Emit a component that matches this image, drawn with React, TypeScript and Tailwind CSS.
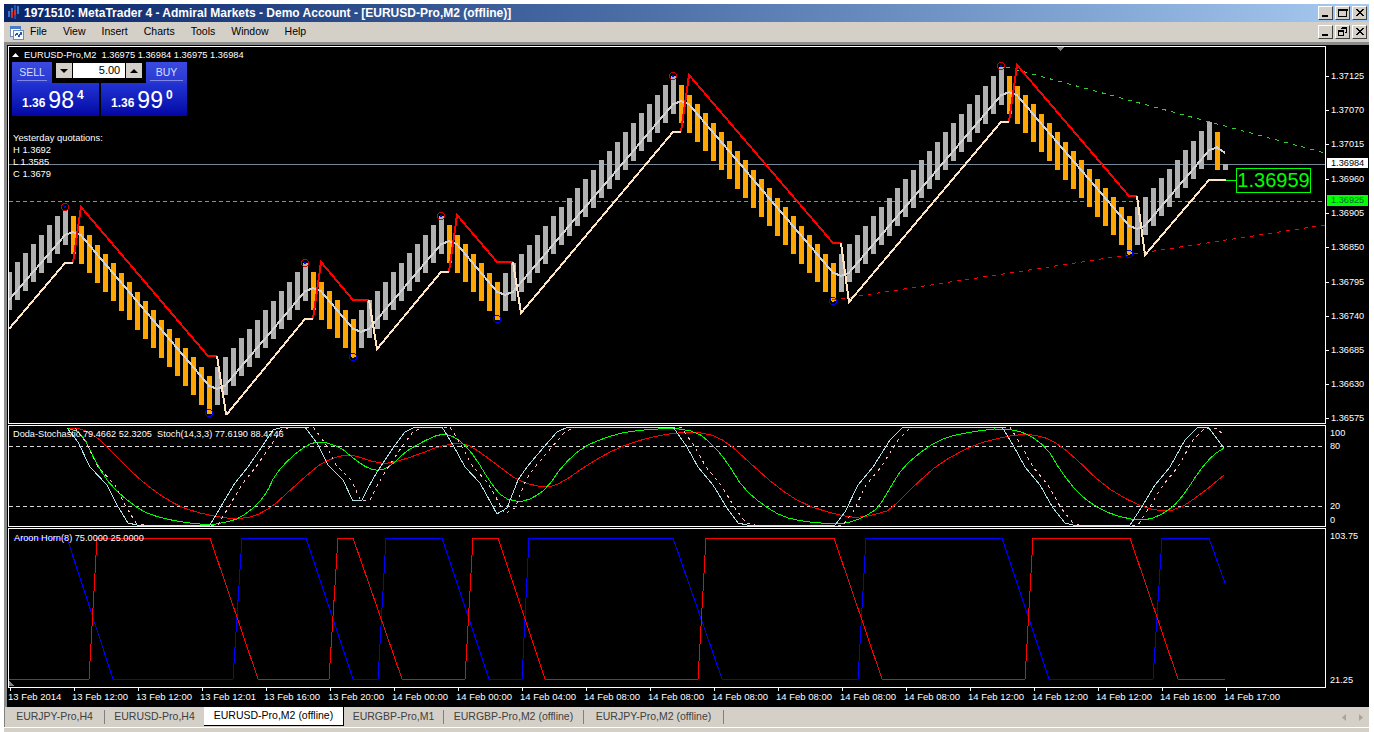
type Pt = [number, number];

const pts = (p: Pt[]) => p.map(([x, y]) => `${x},${y}`).join(' ');

// one corner-cutting pass, the slow stochastic lines are smooth in the terminal
function smooth(p: Pt[]): Pt[] {
  const out: Pt[] = [p[0]];
  for (let i = 0; i < p.length - 1; i++) {
    const [x0, y0] = p[i];
    const [x1, y1] = p[i + 1];
    out.push([x0 * 0.75 + x1 * 0.25, y0 * 0.75 + y1 * 0.25]);
    out.push([x0 * 0.25 + x1 * 0.75, y0 * 0.25 + y1 * 0.75]);
  }
  out.push(p[p.length - 1]);
  return out;
}

// renko bars: k is the bar slot (x = 8k + 1), value is the top of the bar
const pivots: Pt[] = [
  [-1, 290], [8, 207], [26, 376], [38, 263], [44, 319], [55, 216],
  [62, 282], [84, 76], [104, 263], [125, 67], [141, 216], [151, 122],
];

interface Bar {
  k: number;
  top: number;
  h: number;
  down: boolean;
}

function makeBars(): Bar[] {
  const out: Bar[] = [];
  for (let s = 0; s < pivots.length - 1; s++) {
    const [k0, y0] = pivots[s];
    const [k1, y1] = pivots[s + 1];
    for (let k = s === 0 ? k0 : k0 + 1; k <= k1; k++) {
      out.push({ k, top: Math.round(y0 + ((y1 - y0) * (k - k0)) / (k1 - k0)), h: 38, down: y1 > y0 });
    }
  }
  out.push({ k: 152, top: 132, h: 38, down: true });
  out.push({ k: 153, top: 164, h: 6, down: false });
  return out;
}

const bars = makeBars();
const mids = bars.map((b) => b.top + b.h / 2);
const maLine: Pt[] = bars.slice(2).map((b, i) => [8 * b.k + 1, (mids[i] + mids[i + 1] + mids[i + 2]) / 3]);

const redBands: Pt[][] = [
  [[73, 263], [81, 207], [208, 356], [217, 356]],
  [[313, 319], [321, 262], [353, 300], [369, 300]],
  [[449, 272], [457, 215], [497, 262], [513, 262]],
  [[681, 132], [689, 75], [833, 243], [841, 243]],
  [[1009, 122], [1017, 65], [1129, 196], [1137, 196]],
];

const creamBands: Pt[][] = [
  [[9, 329], [65, 263], [73, 263]],
  [[217, 356], [226, 414], [227, 414], [305, 319], [313, 319]],
  [[369, 300], [377, 349], [441, 272], [449, 272]],
  [[513, 262], [521, 313], [673, 132], [681, 132]],
  [[841, 243], [849, 302], [1001, 122], [1009, 122]],
  [[1137, 196], [1145, 255], [1209, 180], [1226, 180]],
];

const highs: Pt[] = [[65, 207], [305, 263], [441, 216], [673, 76], [1001, 66]];
const lows: Pt[] = [[209, 413], [353, 357], [497, 319], [833, 301], [1129, 254]];

const fast: Pt[] = [
  [67, 428], [78, 442], [90, 467], [107, 485], [117, 505], [128, 523], [137, 525], [210, 525], [220, 508],
  [235, 483], [248, 467], [263, 445], [273, 430], [283, 427], [305, 427], [317, 443], [328, 465], [343, 480],
  [353, 501], [362, 500], [368, 488], [377, 472], [393, 448], [405, 432], [415, 427], [442, 427], [453, 445],
  [465, 467], [480, 483], [497, 514], [507, 508], [518, 480], [527, 467], [543, 448], [557, 432], [568, 427],
  [673, 427], [687, 447], [698, 467], [713, 485], [727, 508], [738, 523], [747, 525], [835, 525], [845, 512],
  [858, 485], [873, 467], [890, 440], [903, 427], [1002, 427], [1013, 445], [1025, 467], [1040, 485], [1053, 508],
  [1065, 523], [1073, 525], [1130, 525], [1143, 505], [1155, 485], [1170, 467], [1185, 440], [1197, 428],
  [1208, 427], [1224, 448],
];

const signal: Pt[] = [
  ...fast.slice(0, -2).map(([x, y]): Pt => [x + 8, y]),
  [1216, 428], [1224, 435],
];

const green: Pt[] = [
  [67, 428], [82, 433], [97, 465], [112, 487], [133, 505], [150, 515], [180, 522], [210, 525], [227, 522],
  [240, 518], [257, 505], [267, 492], [275, 475], [290, 458], [307, 445], [320, 441], [340, 447], [353, 458],
  [367, 468], [380, 471], [392, 465], [405, 452], [422, 442], [440, 434], [450, 435], [462, 442], [475, 457],
  [490, 482], [503, 498], [520, 502], [533, 498], [547, 488], [563, 465], [583, 447], [607, 437], [630, 431],
  [673, 428], [697, 432], [713, 445], [727, 462], [743, 488], [763, 505], [783, 517], [807, 522], [835, 524],
  [853, 522], [873, 512], [880, 505], [890, 488], [903, 467], [927, 447], [947, 437], [970, 432], [1002, 428],
  [1027, 433], [1047, 448], [1060, 470], [1077, 492], [1093, 505], [1113, 515], [1140, 521], [1157, 517],
  [1173, 507], [1185, 493], [1200, 470], [1213, 455], [1224, 448],
];

const red: Pt[] = [
  [67, 428], [80, 428], [97, 437], [113, 453], [137, 477], [157, 493], [180, 507], [207, 515], [233, 519],
  [253, 517], [272, 507], [287, 493], [307, 475], [323, 462], [343, 455], [353, 455], [377, 463], [392, 463],
  [417, 455], [440, 446], [460, 443], [473, 447], [497, 465], [520, 482], [547, 488], [563, 482], [587, 465],
  [617, 448], [647, 438], [680, 432], [707, 433], [727, 442], [750, 463], [777, 487], [803, 504], [837, 515],
  [860, 518], [880, 513], [890, 510], [917, 483], [940, 463], [973, 445], [1007, 436], [1030, 434], [1050, 439],
  [1070, 453], [1103, 485], [1133, 503], [1157, 511], [1177, 510], [1200, 495], [1224, 475],
];

const T = 538;
const B = 679;
const aroonBlue: Pt[] = [
  [13, T], [67, T], [113, B], [233, B], [242, T], [306, T], [353, B], [378, B], [386, T], [442, T], [489, B],
  [522, B], [529, T], [673, T], [722, B], [858, B], [866, T], [1002, T], [1049, B], [1153, B], [1162, T],
  [1209, T], [1225, 583],
];
const aroonRed: Pt[] = [
  [9, B], [89, B], [97, T], [210, T], [258, B], [329, B], [338, T], [353, T], [402, B], [465, B], [473, T],
  [498, T], [545, B], [698, B], [706, T], [834, T], [882, B], [1025, B], [1033, T], [1130, T], [1178, B], [1225, B],
];

const times = [
  '13 Feb 2014', '13 Feb 12:00', '13 Feb 12:00', '13 Feb 12:01', '13 Feb 16:00', '13 Feb 20:00', '14 Feb 00:00',
  '14 Feb 00:00', '14 Feb 04:00', '14 Feb 08:00', '14 Feb 08:00', '14 Feb 08:00', '14 Feb 08:00', '14 Feb 08:00',
  '14 Feb 08:00', '14 Feb 12:00', '14 Feb 12:00', '14 Feb 12:00', '14 Feb 16:00', '14 Feb 17:00',
];

const mainScale: [string, number][] = [
  ['1.37125', 76], ['1.37070', 110], ['1.37015', 144], ['1.36960', 179], ['1.36905', 213],
  ['1.36850', 247], ['1.36795', 282], ['1.36740', 316], ['1.36685', 350], ['1.36630', 384], ['1.36575', 418],
];

const tabs = [
  { name: 'EURJPY-Pro,H4', w: 'w-[100px]', sep: true },
  { name: 'EURUSD-Pro,H4', w: 'w-[99px]' },
  { name: 'EURUSD-Pro,M2 (offline)', w: 'w-[140px]', active: true },
  { name: 'EURGBP-Pro,M1', w: 'w-[100px]', sep: true },
  { name: 'EURGBP-Pro,M2 (offline)', w: 'w-[140px]', sep: true },
  { name: 'EURJPY-Pro,M2 (offline)', w: 'w-[140px]', sep: true },
];

function WinButton({ kind }: { kind: 'min' | 'max' | 'close' | 'restore' }) {
  return (
    <div className="w-[15px] h-[14px] bg-[#d4d0c8] border-t border-l border-t-white border-l-white border-r border-b border-r-[#404040] border-b-[#404040]">
      <svg width="13" height="12" viewBox="0 0 13 12" shapeRendering="crispEdges">
        {kind === 'min' && <rect x="3" y="8" width="6" height="2" fill="#000" />}
        {kind === 'max' && <path d="M2.5 2.5h8v7h-8z M2 2h9v1H2z" fill="none" stroke="#000" />}
        {kind === 'close' && <path d="M3 2l7 7M4 2l7 7M10 2l-7 7M11 2l-7 7" stroke="#000" fill="none" />}
        {kind === 'restore' && <path d="M5.5 1.5h5v5h-2M5 2h6M2.5 4.5h5v5h-5zM2 5h6" stroke="#000" fill="none" />}
      </svg>
    </div>
  );
}

function PriceBlock({ big, pip, w }: { big: string; pip: string; w: string }) {
  return (
    <div className={`${w} h-[33px] flex items-start pl-[10px] bg-linear-to-b from-[#2232d4] to-[#0404a4] text-white`}>
      <span className="mt-[13px] text-[12px] leading-[14px] font-bold">1.36</span>
      <span className="mt-[4px] ml-[3px] text-[23px] leading-[27px]">{big}</span>
      <span className="mt-[5px] ml-[3px] text-[12px] leading-[14px] font-bold">{pip}</span>
    </div>
  );
}

function TradePanel() {
  return (
    <div className="absolute left-[3px] top-[15px] w-[175px]">
      <div className="flex items-start">
        <div className="w-[40px] h-[21px] bg-linear-to-b from-[#3a4ae0] to-[#2a38d0] text-[#d8deff] text-[10.5px] flex flex-col items-center pt-[3px]">
          <span className="leading-[14px]">SELL</span>
          <span className="w-[30px] h-px bg-[#7f88e8] mt-px" />
        </div>
        <div className="ml-[3px] w-[88px] h-[17px] bg-black flex items-center gap-px px-px">
          <div className="w-4 h-[15px] bg-[#d4d0c8] flex items-center justify-center">
            <svg width="8" height="4" viewBox="0 0 8 4"><path d="M0 0h8L4 4z" fill="#000" /></svg>
          </div>
          <div className="w-[53px] h-[15px] bg-white text-black text-[11px] leading-[15px] text-right pr-[5px]">5.00</div>
          <div className="w-4 h-[15px] bg-[#d4d0c8] flex items-center justify-center">
            <svg width="8" height="4" viewBox="0 0 8 4"><path d="M0 4h8L4 0z" fill="#000" /></svg>
          </div>
        </div>
        <div className="ml-[3px] w-[41px] h-[21px] bg-linear-to-b from-[#3a4ae0] to-[#2a38d0] text-[#d8deff] text-[10.5px] flex flex-col items-center pt-[3px]">
          <span className="leading-[14px]">BUY</span>
          <span className="w-[33px] h-px bg-[#7f88e8] mt-px" />
        </div>
      </div>
      <div className="flex gap-[2px]">
        <PriceBlock big="98" pip="4" w="w-[87px]" />
        <PriceBlock big="99" pip="0" w="w-[86px]" />
      </div>
    </div>
  );
}

function MainChart() {
  return (
    <svg width="1316" height="376" viewBox="9 47 1316 376" shapeRendering="crispEdges" className="block">
      <line x1="9" x2="1325" y1="164.5" y2="164.5" stroke="#778899" />
      <line x1="9" x2="1325" y1="201.5" y2="201.5" stroke="#32cd32" strokeDasharray="4 3" />
      <polygon points="1056,47 1065,47 1060.5,51" fill="#808080" />
      {bars.filter((b) => b.k >= 1).map((b) => (
        <rect
          key={b.k}
          x={8 * b.k - 1}
          y={b.k === 8 ? 210 : b.top}
          width="5"
          height={b.k === 8 ? 35 : b.h}
          fill={b.down ? '#ffa500' : '#b0b0b0'}
        />
      ))}
      <line x1="1006" y1="67" x2="1325" y2="153" stroke="#32cd32" strokeDasharray="4 5" />
      <line x1="832" y1="300" x2="1325" y2="225" stroke="#ff0000" strokeDasharray="4 5" />
      <polyline points={pts(maLine)} fill="none" stroke="#d3d3d3" strokeWidth="2" strokeLinejoin="round" />
      {redBands.map((p, i) => (
        <polyline key={i} points={pts(p)} fill="none" stroke="#ff0000" strokeWidth="2" />
      ))}
      {creamBands.map((p, i) => (
        <polyline key={i} points={pts(p)} fill="none" stroke="#ffe4c4" strokeWidth="2" />
      ))}
      <line x1="1226" x2="1236" y1="180" y2="180" stroke="#00ff00" />
      {highs.map(([x, y]) => (
        <g key={x}>
          <circle cx={x} cy={y} r="3.5" fill="none" stroke="#d00000" />
          <rect x={x - 1} y={y - 1} width="2" height="2" fill="#0000ff" />
        </g>
      ))}
      {lows.map(([x, y]) => (
        <g key={x}>
          <circle cx={x} cy={y} r="3.5" fill="none" stroke="#0000ff" />
          <rect x={x - 1} y={y - 1} width="2" height="2" fill="#ffa500" />
        </g>
      ))}
    </svg>
  );
}

function StochChart() {
  return (
    <svg width="1316" height="100" viewBox="9 426 1316 100" shapeRendering="crispEdges" className="block">
      <line x1="9" x2="1325" y1="446.5" y2="446.5" stroke="#d8d8d8" strokeDasharray="4 3" />
      <line x1="9" x2="1325" y1="506.5" y2="506.5" stroke="#d8d8d8" strokeDasharray="4 3" />
      <polyline points={pts(smooth(red))} fill="none" stroke="#ff0000" />
      <polyline points={pts(smooth(green))} fill="none" stroke="#00ff00" />
      <polyline points={pts(signal)} fill="none" stroke="#ffc0cb" strokeDasharray="3 4" />
      <polyline points={pts(fast)} fill="none" stroke="#b0e0e6" />
    </svg>
  );
}

function AroonChart() {
  return (
    <svg width="1316" height="158" viewBox="9 529 1316 158" shapeRendering="crispEdges" className="block">
      <polyline points={pts(aroonBlue)} fill="none" stroke="#0000ff" />
      <polyline points={pts(aroonRed)} fill="none" stroke="#ff0000" />
      <polygon points="9,681 14,686 9,686" fill="#808080" />
    </svg>
  );
}

function ScaleLabel({ y, children, tick = false }: { y: number; children: string; tick?: boolean }) {
  return (
    <div className="absolute left-0 flex items-center h-[12px]" style={{ top: y - 6 }}>
      <span className={tick ? 'w-[3px] h-px bg-white mr-[2px]' : 'w-[4px]'} />
      <span className="text-[9.2px] leading-[12px] text-white">{children}</span>
    </div>
  );
}

export default function App() {
  return (
    <div className="w-[1374px] h-[732px] bg-white overflow-hidden pt-1 pl-1 font-['Liberation_Sans',sans-serif]">
      <div className="w-[1365px] h-[728px] flex flex-col bg-[#d4d0c8]">
        {/* title bar */}
        <div className="h-[18px] flex items-center bg-linear-to-r from-[#0a246a] to-[#a6caf0] pl-1 pr-[2px]">
          <svg width="12" height="16" viewBox="0 0 12 16" shapeRendering="crispEdges">
            <path d="M0 6h2v6H0z M3 3h2v9H3z M9 1h2v8H9z" fill="#3a78c8" />
            <path d="M6 0h2v14H6z" fill="#2050a8" />
            <path d="M3 7h2v6H3z M6 5h2v5H6z" fill="#d03028" />
          </svg>
          <span className="ml-1 text-white font-bold text-[12px] whitespace-nowrap">
            1971510: MetaTrader 4 - Admiral Markets - Demo Account - [EURUSD-Pro,M2 (offline)]
          </span>
          <div className="ml-auto flex">
            <WinButton kind="min" />
            <div className="w-[2px]" />
            <WinButton kind="max" />
            <div className="w-[2px]" />
            <WinButton kind="close" />
          </div>
        </div>

        {/* menu bar */}
        <div className="h-[20px] flex items-center pl-[5px] pr-[2px] text-[10.5px] text-black">
          <svg width="15" height="15" viewBox="0 0 15 15" shapeRendering="crispEdges">
            <rect x="1.5" y="1.5" width="10" height="10" fill="#ffffff" stroke="#6a8cc0" />
            <rect x="1" y="1" width="11" height="3" fill="#4a7cc8" />
            <rect x="4.5" y="5.5" width="10" height="9" fill="#f4f8ff" stroke="#6a8cc0" />
            <path d="M6 11l2-3 2 4 2-5 1 3" fill="none" stroke="#2a58a8" />
          </svg>
          <div className="ml-[6px] flex gap-[16px]">
            {['File', 'View', 'Insert', 'Charts', 'Tools', 'Window', 'Help'].map((m) => (
              <span key={m}>{m}</span>
            ))}
          </div>
          <div className="ml-auto flex">
            <WinButton kind="min" />
            <div className="w-[2px]" />
            <WinButton kind="restore" />
            <div className="w-[2px]" />
            <WinButton kind="close" />
          </div>
        </div>

        {/* chart window */}
        <div className="h-[665px] bg-black border-t-[3px] border-l-[3px] border-[#8c8c8c] pt-px pl-px flex flex-col gap-px text-white">
          <div className="flex">
            <div className="relative w-[1318px] h-[378px] border border-white">
              <MainChart />
              <div className="absolute left-[3px] top-[2px] flex items-center text-[9.3px] leading-[12px] whitespace-pre">
                <svg width="7" height="4" viewBox="0 0 7 4" className="mr-[5px]"><path d="M0 4h7L3.5 0z" fill="#fff" /></svg>
                <span>EURUSD-Pro,M2  1.36975 1.36984 1.36975 1.36984</span>
              </div>
              <TradePanel />
              <div className="absolute left-[4px] top-[85px] text-[9.4px] leading-[12px]">
                <div>Yesterday quotations:</div>
                <div>H 1.3692</div>
                <div>L 1.3585</div>
                <div>C 1.3679</div>
              </div>
              <div className="absolute left-[1227px] top-[121px] w-[75px] h-[25px] border border-[#00ff00] bg-black text-[#00ff00] text-[20px] leading-[23px] text-center">
                1.36959
              </div>
            </div>
            <div className="relative flex-1">
              {mainScale.map(([label, y]) => (
                <ScaleLabel key={label} y={y - 46} tick>{label}</ScaleLabel>
              ))}
              <div className="absolute left-[1px] top-[112px] w-[41px] h-[10px] bg-white text-black text-[9.2px] leading-[10px] pl-[4px]">1.36984</div>
              <div className="absolute left-[1px] top-[149px] w-[41px] h-[11px] bg-[#00ff00] text-[#063] text-[9.2px] leading-[11px] pl-[4px]">1.36925</div>
            </div>
          </div>

          <div className="flex">
            <div className="relative w-[1318px] h-[102px] border border-white">
              <StochChart />
              <div className="absolute left-[4px] top-[2px] text-[9.2px] leading-[12px] whitespace-pre">
                Doda-Stochastic 79.4662 52.3205  Stoch(14,3,3) 77.6190 88.4746
              </div>
            </div>
            <div className="relative flex-1">
              <ScaleLabel y={8}>100</ScaleLabel>
              <ScaleLabel y={21}>80</ScaleLabel>
              <ScaleLabel y={81}>20</ScaleLabel>
              <ScaleLabel y={95}>0</ScaleLabel>
            </div>
          </div>

          <div className="flex">
            <div className="relative w-[1318px] h-[160px] border border-white">
              <AroonChart />
              <div className="absolute left-[5px] top-[3px] text-[9.2px] leading-[12px] whitespace-pre">
                Aroon Horn(8) 75.0000 25.0000
              </div>
            </div>
            <div className="relative flex-1">
              <ScaleLabel y={8}>103.75</ScaleLabel>
              <ScaleLabel y={152}>21.25</ScaleLabel>
            </div>
          </div>

          <div className="flex -mt-px">
            {times.map((t, i) => (
              <div key={i} className="w-16 shrink-0">
                <div className="w-px h-[3px] bg-white ml-[2px]" />
                <div className="text-[9.5px] leading-[12px] whitespace-nowrap">{t}</div>
              </div>
            ))}
          </div>
        </div>

        {/* tabs */}
        <div className="h-[20px] flex items-start border-l border-[#808080] text-[10.5px] text-[#404040]">
          {tabs.map((t) =>
            t.active ? (
              <div key={t.name} className={`${t.w} h-[19px] bg-white text-black border-r border-b border-black flex items-center justify-center`}>
                {t.name}
              </div>
            ) : (
              <div key={t.name} className={`${t.w} h-[19px] flex items-center`}>
                <span className="flex-1 text-center">{t.name}</span>
                {t.sep && <span className="w-px h-[14px] bg-[#808080]" />}
              </div>
            ),
          )}
          <div className="ml-auto flex items-center gap-[13px] h-[20px] pr-[6px]">
            <svg width="4" height="7" viewBox="0 0 4 7"><path d="M4 0v7L0 3.5z" fill="#a8a49c" /></svg>
            <svg width="4" height="7" viewBox="0 0 4 7"><path d="M0 0v7l4-3.5z" fill="#a8a49c" /></svg>
          </div>
        </div>
        <div className="h-px bg-white shrink-0" />
      </div>
    </div>
  );
}
